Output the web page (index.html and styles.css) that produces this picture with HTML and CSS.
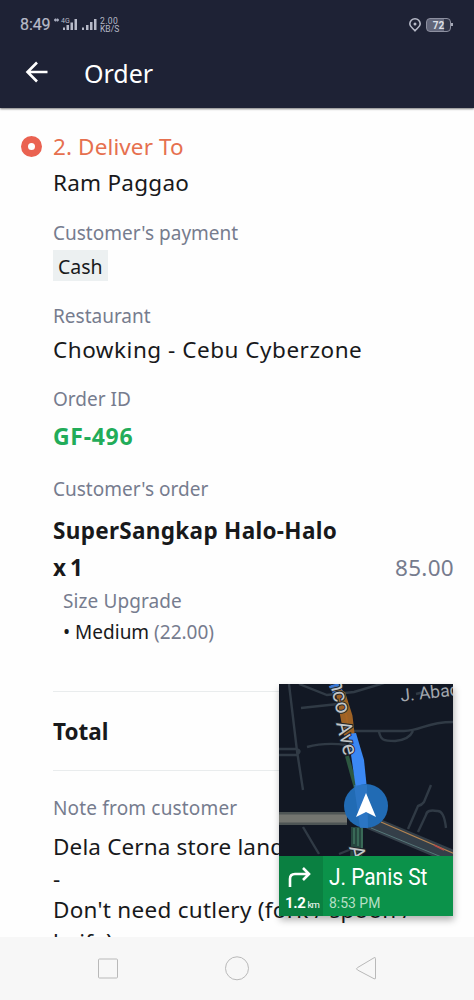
FILE: index.html
```html
<!DOCTYPE html>
<html lang="en">
<head>
<meta charset="utf-8">
<title>Order</title>
<link rel="stylesheet" href="styles.css">
</head>
<body>
<div class="screen">
  <header class="header">
    <div class="status">
      <span class="clock">8:49</span>
      <svg class="signals" width="44" height="16" viewBox="0 0 44 16">
        <path d="M0 4h5M1.500 2.500v3M3.500 2.500v3" stroke="#a9adbf" stroke-width="1.300"/>
        <text x="7" y="7" class="gen">4G</text>
        <g fill="#b7bac8"><path d="M9 11.500h2V14H9zM12.500 9H15v5h-2.500zM16.500 6.500H19V14h-2.500zM20.500 3H23v11h-2.500zM28 11.500h2V14h-2zM32 9h2.500v5H32zM36 6h2.500v8H36zM40 3h2.500v11H40z"/></g>
      </svg>
      <span class="rate"><span>2.00</span><span>KB/S</span></span>
      <svg class="pin" width="14" height="16" viewBox="0 0 14 16"><path d="M7 1.700a5.200 5.200 0 0 1 5.200 5.200c0 2.800-2.700 4-5.200 6.800-2.500-2.800-5.200-4-5.200-6.800a5.200 5.200 0 0 1 5.200-5.200z" fill="none" stroke="#b7bac8" stroke-width="1.600"/><circle cx="7" cy="7" r="1.500" fill="#b7bac8"/></svg>
      <span class="battery">72</span><i class="battery-tip"></i>
    </div>
    <div class="bar">
      <svg width="24" height="24" viewBox="0 0 24 24" fill="none" stroke="#fff" stroke-width="2.600"><path d="M22.500 12H3M12 2.500 2.500 12l9.500 9.500"/></svg>
      <h1 class="title">Order</h1>
    </div>
  </header>

  <main class="content">
    <div class="step"><i class="dot"></i><span class="step-text">2. Deliver To</span></div>
    <div class="value name">Ram Paggao</div>
    <div class="label pay-label">Customer's payment</div>
    <div class="tag">Cash</div>
    <div class="label rest-label">Restaurant</div>
    <div class="value rest">Chowking - Cebu Cyberzone</div>
    <div class="label id-label">Order ID</div>
    <div class="value order-id">GF-496</div>
    <div class="label order-label">Customer's order</div>
    <div class="item">
      <div class="item-name"><div>SuperSangkap Halo-Halo</div><div class="qty">x 1</div></div>
      <div class="price">85.00</div>
    </div>
    <div class="option-title">Size Upgrade</div>
    <div class="option"><i class="bullet">•</i> Medium <span>(22.00)</span></div>
    <div class="total"><span>Total</span></div>
    <div class="label note-label">Note from customer</div>
    <div class="note">
      <div class="note-first">Dela Cerna store landmark</div>
      <div>-</div>
      <div class="note-third">Don't need cutlery (fork / spoon /</div>
      <div>knife)</div>
    </div>
  </main>

  <nav class="nav">
    <svg width="474" height="63" viewBox="0 0 474 63" fill="none" stroke="#b9b9b9" stroke-width="1">
      <rect x="98.500" y="22" width="19" height="19" rx="1"/>
      <circle cx="237" cy="31.300" r="11.500"/>
      <path d="M375.500 21.500v19.500q0 1.500-1.500.700L357.500 33q-2-1.200 0-2.400L374 20.800q1.500-.8 1.500.7z"/>
    </svg>
  </nav>

  <aside class="pip">
    <svg class="map" width="174" height="172" viewBox="0 0 174 172">
      <rect width="174" height="172" fill="#121824"/>
      <g fill="none" stroke="#303a45" stroke-width="2.400">
        <path d="M10 0 18 67 24 106M20 0l28 11 27-3 30-9M22 24l37-4M0 65h17q7 2 0 6H0M28 63q18-5 40-2M75 47h50c18 0 21-9 49-9M100 48c2 8 4 9 16 9q14-1 18-10M152 101l-7 17q-2 3-6 4l-10 23M167 144q-2-18-9-17-10-2-11 4l-8 17M24 143l10 17 6 10M60 170l15-6M137 10l8-2"/>
      </g>
      <path d="M0 134.500h68" stroke="#4e5555" stroke-width="13"/><path d="M0 134.500h68" stroke="#737570" stroke-width="8"/>
      <path d="M90 138 176 174" stroke="#343f49" stroke-width="14"/>
      <path d="M102 138 176 170" stroke="#b48451" stroke-width="1.200"/><path d="M155 161 165 166" stroke="#b64e49" stroke-width="1.500"/><path d="M92 144 165 174" stroke="#567779" stroke-width="1"/>
      <path d="M78 143v17l-1 14" stroke="#26463f" stroke-width="12" fill="none"/>
      <path d="M75 144v16M79 144v18M83 144v20" stroke="#4d8c71" stroke-width="1"/>
      <path d="M68 72 78 108" stroke="#2d5841" stroke-width="4"/>
      <path d="M54 0 60 10" stroke="#3778d8" stroke-width="10"/>
      <path d="M59 7 64 10 71 32 73 49 67 49z" fill="#a86523" stroke="#9e6225" stroke-width="5"/>
      <path d="M69 50 77 49 85 76 88 105 77 105z" fill="#3b88f3"/>
      <circle cx="87" cy="122" r="22" fill="#216bb4"/><path d="M75 101h13l1 43h-8z" fill="#317bcc" opacity=".65"/>
      <path d="M87 109 97 133 87 128 77 133z" fill="#fff"/>
      <g class="street">
        <text transform="translate(50.500 -3) rotate(77)">nco</text>
        <text transform="translate(57 39) rotate(76)">Ave</text>
        <text transform="translate(70 163) rotate(78)">A</text>
      </g>
      <text class="street-side" transform="translate(122 17.500) rotate(-6)">J. Abad</text>
    </svg>
    <div class="directions">
      <div class="turn">
        <svg width="26" height="23" viewBox="0 0 26 23" fill="none" stroke="#fff" stroke-width="2.600"><path d="M3 21v-8q0-5 5-5h14M16 2l6 6-6 6"/></svg>
        <div class="distance"><b>1.2</b><span>km</span></div>
      </div>
      <div class="next"><div class="next-street">J. Panis St</div><div class="eta">8:53 PM</div></div>
    </div>
  </aside>
</div>
</body>
</html>
```
FILE: styles.css
```css
* { box-sizing: border-box; }
body { margin: 0; font-family: "Noto Sans", sans-serif; color: #18191b; background: #fefefe; }
i { font-style: normal; }
.screen { position: relative; width: 474px; height: 1000px; overflow: hidden; display: flex; flex-direction: column; }
.header { height: 108px; flex: none; background: #1e2235; box-shadow: 0 1px 2px #777; z-index: 1; }
.status { display: flex; align-items: center; height: 47px; padding: 2px 21px 0 20px; color: #b7bac8; font-family: Roboto, sans-serif; }
.clock { font-size: 16px; width: 34px; letter-spacing: -.1px; -webkit-text-stroke: .2px; }
.signals { margin-top: -1px; }
.gen { font: 7px Roboto, sans-serif; fill: #b7bac8; }
.rate { display: flex; flex-direction: column; font-size: 8.5px; line-height: 8px; margin-left: 2px; }
.rate span:first-child { letter-spacing: .4px; }
.pin { margin-left: auto; }
.battery { width: 25px; height: 14px; margin-left: 4px; border: 1px solid #8d90a0; border-radius: 4px; background: linear-gradient(90deg, #62667a 72%, #303448 72%); font-size: 10px; font-weight: bold; line-height: 13px; text-align: center; color: #dfe0e8; }
.battery-tip { width: 2px; height: 3px; background: #a5a8b6; }
.bar { display: flex; align-items: center; height: 50px; padding-left: 25px; gap: 35px; }
.title { margin: 0; padding-top: 2px; color: #fff; font-size: 25px; font-weight: 400; line-height: 32px; }
.content { flex: 1; min-height: 0; overflow: hidden; padding: 23px 21px 0 53px; display: flow-root; }
.step { display: flex; align-items: center; height: 32px; margin-left: -32px; gap: 11px; color: #e6704f; font-size: 22.5px; line-height: 32px; letter-spacing: .12px; }
.dot { width: 21px; height: 21px; margin-top: -2px; border: 7.500px solid #ea6251; border-radius: 50%; }
.value { font-size: 22.5px; line-height: 32px; white-space: nowrap; }
.name { margin-top: 4px; letter-spacing: .25px; }
.label { font-size: 19px; line-height: 26px; color: #767c8e; }
.pay-label { margin-top: 21px; }
.tag { width: 55px; height: 31px; margin-top: 4px; padding-left: 5px; background: #ecf0f1; font-size: 19.5px; line-height: 33px; }
.rest-label { margin-top: 22px; }
.rest { margin-top: 5px; letter-spacing: .52px; }
.id-label { margin-top: 20px; }
.order-id { margin-top: 8px; font-size: 23px; font-weight: 700; letter-spacing: .7px; color: #22ac59; }
.order-label { margin-top: 24px; }
.item { display: flex; justify-content: space-between; align-items: flex-end; margin-top: 10px; }
.item-name { font-size: 22.5px; font-weight: 700; line-height: 37px; letter-spacing: .32px; white-space: nowrap; }
.qty { letter-spacing: -.9px; }
.price { font-size: 22.5px; line-height: 37px; letter-spacing: .3px; margin-right: -1px; color: #767c8e; }
.option-title { margin: 2px 0 0 10px; font-size: 19px; line-height: 26px; letter-spacing: .1px; color: #767c8e; }
.option { margin: 5px 0 0 10px; font-size: 19px; line-height: 26px; }
.option span { color: #767c8e; }
.total { height: 80px; margin-top: 46px; border-top: 1px solid #e9eced; border-bottom: 1px solid #e9eced; font-size: 22.5px; font-weight: 700; line-height: 80px; }
.note-label { margin-top: 24px; letter-spacing: .17px; }
.note { margin-top: 10px; font-size: 22.5px; line-height: 31.5px; white-space: nowrap; letter-spacing: .15px; }
.note-third { letter-spacing: .27px; }
.nav { flex: none; height: 63px; background: #f7f7f7; }
.nav svg { display: block; }
.pip { position: absolute; z-index: 2; left: 279px; top: 684px; width: 174px; height: 232px; box-shadow: 1px 4px 7px rgba(0,0,0,.3); overflow: hidden; }
.map { display: block; }
.street { font: 21px Roboto, sans-serif; fill: #c2c6c9; stroke: #20262e; stroke-width: 2px; paint-order: stroke; }
.street-side { font: 17.5px Roboto, sans-serif; fill: #a2a7ad; }
.directions { display: flex; height: 60px; background: #0b924a; color: #fff; font-family: Roboto, sans-serif; }
.turn { width: 44px; background: #0a8041; padding: 10px 0 0 6px; }
.turn svg { display: block; margin-left: 2px; }
.distance { display: flex; align-items: baseline; gap: 2px; line-height: 20px; margin-top: 4px; }
.distance b { font-size: 15px; letter-spacing: -.4px; }
.distance span { font-size: 9.5px; letter-spacing: -.8px; }
.next { padding: 6px 0 0 6px; white-space: nowrap; }
.next-street { font-size: 24px; line-height: 31px; transform: scaleX(.87); transform-origin: left; }
.eta { font-size: 15.5px; line-height: 21px; color: #b6dfc5; transform: scaleX(.9); transform-origin: left; }
```
